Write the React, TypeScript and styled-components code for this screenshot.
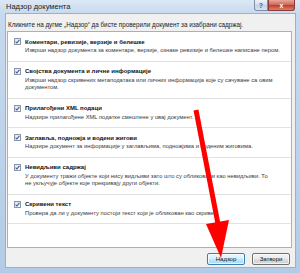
import React from "react";
import styled, { createGlobalStyle } from "styled-components";

const Global = createGlobalStyle`
  html, body { margin: 0; padding: 0; background: #ffffff; }
  body { font-family: "Liberation Sans", Arial, sans-serif; }
`;

const Window = styled.div`
  position: relative;
  width: 300px;
  height: 273px;
  box-sizing: border-box;
  padding: 0 4px 5px 5px;
  display: flex;
  flex-direction: column;
  background: linear-gradient(180deg, #dce8f5 0px, #c6d9ee 14px, #bcd2ea 60%, #b3cbe6 100%);
  overflow: hidden;
`;

const TitleBar = styled.div`
  height: 13px;
  display: flex;
  justify-content: space-between;
  align-items: flex-start;
`;

const Title = styled.span`
  font-size: 7.5px;
  line-height: 13px;
  color: #1b1b1b;
  padding-left: 1px;
`;

const Controls = styled.div`
  display: flex;
  margin-right: 1px;
`;

const CaptionBtn = styled.div<{ $close?: boolean }>`
  height: 11px;
  width: ${(p) => (p.$close ? "27px" : "14px")};
  box-sizing: border-box;
  border: 1px solid ${(p) => (p.$close ? "#8b3a3a" : "#7d8ea6")};
  border-top: none;
  border-radius: ${(p) => (p.$close ? "0 0 3px 0" : "0 0 0 3px")};
  background: ${(p) =>
    p.$close
      ? "linear-gradient(180deg, #e8a89c 0%, #d46a5a 45%, #c0412f 55%, #d8836f 100%)"
      : "linear-gradient(180deg, #eef3fa 0%, #d3dfee 45%, #c2d2e6 55%, #d8e4f2 100%)"};
  display: flex;
  align-items: center;
  justify-content: center;
  font-size: 7px;
  font-weight: bold;
  color: ${(p) => (p.$close ? "#ffffff" : "#4a5d78")};
`;

const Body = styled.div`
  flex: 1;
  display: flex;
  flex-direction: column;
  background: #f0f0f0;
  border: 1px solid #9cb0c8;
  padding: 0 3px 0 0;
`;

const Intro = styled.div`
  font-size: 6.3px;
  line-height: 9px;
  color: #1a1a1a;
  padding: 6px 0 0 2px;
  margin-bottom: 2px;
  white-space: nowrap;
`;

const ListBox = styled.div`
  margin-left: 1px;
  height: 217px;
  box-sizing: border-box;
  border: 1px solid #a9b0ba;
  background: #ffffff;
  overflow: hidden;
`;

const Item = styled.div`
  padding: 4px 0 6px 17px;
  border-bottom: 1px solid #e2e2e2;
`;

const ItemHead = styled.div`
  position: relative;
  height: 11px;
  display: flex;
  align-items: center;
`;

const Check = styled.div`
  position: absolute;
  left: -11px;
  top: 2px;
  width: 7px;
  height: 7px;
  box-sizing: border-box;
  border: 1px solid #8a96a8;
  background: linear-gradient(135deg, #dfe5ee, #fbfcfe);
  display: flex;
  align-items: center;
  justify-content: center;
`;

const ItemTitle = styled.span`
  font-size: 6px;
  font-weight: bold;
  color: #111111;
  white-space: nowrap;
`;

const Desc = styled.div`
  font-size: 5.8px;
  line-height: 7.5px;
  color: #3a3a3a;
  padding-right: 8px;
`;

const Footer = styled.div`
  display: flex;
  justify-content: flex-end;
  gap: 7px;
  padding: 5px 2px 0 0;
`;

const Button = styled.div<{ $default?: boolean }>`
  width: 38px;
  height: 12px;
  box-sizing: border-box;
  border: 1px solid ${(p) => (p.$default ? "#3c7fb1" : "#707070")};
  border-radius: 2px;
  background: ${(p) =>
    p.$default
      ? "linear-gradient(180deg, #eaf6fd 0%, #d9f0fc 45%, #bee6fd 55%, #a7d9f5 100%)"
      : "linear-gradient(180deg, #f2f2f2 0%, #ebebeb 45%, #dddddd 55%, #cfcfcf 100%)"};
  box-shadow: inset 0 0 0 1px rgba(255, 255, 255, 0.7);
  display: flex;
  align-items: center;
  justify-content: center;
  font-size: 6px;
  color: #111111;
`;

const ArrowLayer = styled.svg`
  position: absolute;
  left: 0;
  top: 0;
  pointer-events: none;
`;

const items = [
  {
    title: "Коментари, ревизије, верзије и белешке",
    desc: "Изврши надзор документа за коментаре, верзије, ознаке ревизије и белешке написане пером.",
  },
  {
    title: "Својства документа и личне информације",
    desc: "Изврши надзор скривених метаподатака или личних информација које су сачуване са овим документом.",
  },
  {
    title: "Прилагођени XML подаци",
    desc: "Надзире прилагођене XML податке смештене у овај документ.",
  },
  {
    title: "Заглавља, подножја и водени жигови",
    desc: "Надзире документ за информације у заглављима, подножјима и воденим жиговима.",
  },
  {
    title: "Невидљиви садржај",
    desc: "У документу тражи објекте који нису видљиви зато што су обликовани као невидљиви. То не\u00a0укључује објекте које прекривају други објекти.",
  },
  {
    title: "Скривени текст",
    desc: "Провера да ли у документу постоји текст који је обликован као скривен.",
  },
];

const CheckMark = () => (
  <svg width="5" height="5" viewBox="0 0 5 5">
    <path d="M0.6 2.6 L1.9 4 L4.4 0.8" fill="none" stroke="#3d5a98" strokeWidth="1.1" />
  </svg>
);

export default function App() {
  return (
    <>
      <Global />
      <Window>
        <TitleBar>
          <Title>Надзор документа</Title>
          <Controls>
            <CaptionBtn>?</CaptionBtn>
            <CaptionBtn $close>x</CaptionBtn>
          </Controls>
        </TitleBar>
        <Body>
          <Intro>Кликните на дугме „Надзор“ да бисте проверили документ за изабрани садржај.</Intro>
          <ListBox>
            {items.map((it) => (
              <Item key={it.title}>
                <ItemHead>
                  <Check>
                    <CheckMark />
                  </Check>
                  <ItemTitle>{it.title}</ItemTitle>
                </ItemHead>
                <Desc>{it.desc}</Desc>
              </Item>
            ))}
          </ListBox>
          <Footer>
            <Button $default>Надзор</Button>
            <Button>Затвори</Button>
          </Footer>
        </Body>
        <ArrowLayer width="300" height="273" viewBox="0 0 300 273">
          <line x1="196" y1="110" x2="218" y2="224" stroke="#ff0000" strokeWidth="5" />
          <polygon points="206,224 229,220 221,258" fill="#ff0000" />
        </ArrowLayer>
      </Window>
    </>
  );
}
